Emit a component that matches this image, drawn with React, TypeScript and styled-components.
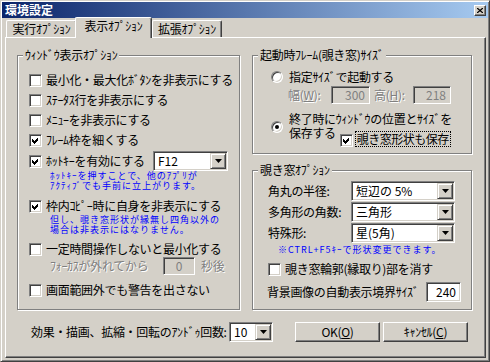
import styled, { createGlobalStyle } from "styled-components";

const face = `"Noto Sans CJK JP", "Noto Sans", sans-serif`;

const GlobalStyle = createGlobalStyle`
  html, body { margin: 0; padding: 0; background: #d4d0c8; }
  body { font-family: ${face}; }
`;

const Window = styled.div`
  width: 490px;
  height: 362px;
  box-sizing: border-box;
  display: flex;
  flex-direction: column;
  padding: 1px;
  background: #d4d0c8;
  border: 1px solid;
  border-color: #d4d0c8 #404040 #404040 #d4d0c8;
  box-shadow: inset 1px 1px #fff, inset -1px -1px #808080;
  font-family: ${face};
  font-size: 12px;
  line-height: 12px;
  letter-spacing: -0.3px;
  color: #000;
`;

const TitleBar = styled.div`
  height: 16px;
  flex: none;
  display: flex;
  align-items: center;
  justify-content: space-between;
  padding: 0 2px 0 3px;
  background: linear-gradient(to right, #0a246a, #a6caf0);
`;

const Title = styled.span`
  color: #fff;
  font-weight: bold;
  line-height: 16px;
  letter-spacing: 0;
`;

const CloseButton = styled.div`
  width: 12px;
  height: 11px;
  box-sizing: border-box;
  display: flex;
  align-items: center;
  justify-content: center;
  background: #d4d0c8;
  border: 1px solid;
  border-color: #fff #404040 #404040 #fff;
  box-shadow: inset -1px -1px #808080;
`;

const TabStrip = styled.div`
  height: 19px;
  flex: none;
  display: flex;
  align-items: flex-end;
  margin: 0 2px 0 3px;
  padding-left: 1px;
  position: relative;
  z-index: 1;
`;

const Tab = styled.div<{ $w: number; $active?: boolean }>`
  width: ${(p) => p.$w}px;
  height: ${(p) => (p.$active ? 21 : 17)}px;
  margin: 0 0 ${(p) => (p.$active ? -1 : 0)}px ${(p) => (p.$active ? -2 : 0)}px;
  padding-bottom: ${(p) => (p.$active ? 4 : 0)}px;
  box-sizing: border-box;
  display: flex;
  align-items: center;
  justify-content: center;
  position: relative;
  z-index: ${(p) => (p.$active ? 2 : 1)};
  background: #d4d0c8;
  border-top: 1px solid #fff;
  border-left: 1px solid #fff;
  border-right: 1px solid #404040;
  border-radius: 2px 2px 0 0;
  box-shadow: inset -1px 0 #808080;
  white-space: nowrap;
`;

const Panel = styled.div`
  flex: 1;
  min-height: 0;
  box-sizing: border-box;
  margin: 0 2px 2px 3px;
  padding: 11px 13px 0 11px;
  display: flex;
  flex-direction: column;
  border: 1px solid;
  border-color: #fff #404040 #404040 #fff;
  box-shadow: inset -1px -1px #808080;
`;

const Columns = styled.div`
  display: grid;
  grid-template-columns: 223px 220px;
  column-gap: 12px;
  align-items: start;
`;

const RightColumn = styled.div`
  display: flex;
  flex-direction: column;
  gap: 10px;
`;

const Group = styled.fieldset<{ $h: number }>`
  margin: 0;
  padding: 0;
  min-inline-size: 0;
  height: ${(p) => p.$h}px;
  box-sizing: border-box;
  border: 1px solid #808080;
  box-shadow: inset 1px 1px #fff, 1px 1px #fff;
`;

const Caption = styled.legend`
  margin-left: 5px;
  padding: 0 2px;
  line-height: 12px;
  background: #d4d0c8;
  white-space: nowrap;
`;

const GroupBody = styled.div<{ $pl: number; $pt: number }>`
  display: flex;
  flex-direction: column;
  padding: ${(p) => p.$pt}px 0 0 ${(p) => p.$pl}px;
`;

const Row = styled.div<{ $mt?: number; $h?: number; $pl?: number }>`
  display: flex;
  align-items: center;
  height: ${(p) => p.$h ?? 20}px;
  margin-top: ${(p) => p.$mt ?? 0}px;
  padding-left: ${(p) => p.$pl ?? 0}px;
  white-space: nowrap;
`;

const Label = styled.span<{ $w?: number; $dim?: boolean; $ml?: number }>`
  flex: none;
  ${(p) => (p.$w ? `width: ${p.$w}px;` : "")}
  margin-left: ${(p) => p.$ml ?? 0}px;
  color: ${(p) => (p.$dim ? "#808080" : "#000")};
  ${(p) => (p.$dim ? "text-shadow: 1px 1px #fff;" : "")}
  white-space: nowrap;
`;

const Note = styled.div<{ $mt?: number; $pl: number }>`
  margin-top: ${(p) => p.$mt ?? 0}px;
  padding-left: ${(p) => p.$pl}px;
  color: #0000ff;
  font-size: 9px;
  line-height: 10px;
  letter-spacing: 1px;
  white-space: nowrap;
`;

const CheckBox = styled.span`
  width: 13px;
  height: 13px;
  flex: none;
  box-sizing: border-box;
  margin-right: 4px;
  display: flex;
  align-items: center;
  justify-content: center;
  background: #fff;
  border: 1px solid;
  border-color: #808080 #fff #fff #808080;
  box-shadow: inset 1px 1px #404040, inset -1px -1px #d4d0c8;
`;

const RadioDot = styled.span<{ $mt: number }>`
  width: 12px;
  height: 12px;
  flex: none;
  box-sizing: border-box;
  margin: ${(p) => p.$mt}px 6px 0 0;
  display: flex;
  align-items: center;
  justify-content: center;
  border-radius: 50%;
  background: #fff;
  border: 1px solid;
  border-color: #808080 #fff #fff #808080;
  box-shadow: inset 1px 1px #404040, inset -1px -1px #d4d0c8;
`;

const Dot = styled.span`
  width: 4px;
  height: 4px;
  border-radius: 50%;
  background: #000;
`;

const RadioRow = styled.div<{ $mt: number }>`
  display: flex;
  align-items: flex-start;
  margin-top: ${(p) => p.$mt}px;
  white-space: nowrap;
`;

const RadioText = styled.span`
  line-height: 20px;
`;

const TextBlock = styled.div`
  display: flex;
  flex-direction: column;
`;

const Line = styled.div`
  display: flex;
  align-items: flex-start;
  line-height: 14px;
`;

const SubCheck = styled.div`
  display: flex;
  align-items: flex-end;
  height: 16px;
  margin: 5px 0 0 4px;
`;

const FocusLabel = styled.span`
  height: 16px;
  box-sizing: border-box;
  margin-left: -2px;
  padding: 0 1px;
  line-height: 14px;
  letter-spacing: -0.5px;
  border: 1px dotted #000;
`;

const Sunken = styled.div<{ $w: number; $h?: number; $off?: boolean }>`
  width: ${(p) => p.$w}px;
  height: ${(p) => p.$h ?? 20}px;
  flex: none;
  box-sizing: border-box;
  display: flex;
  padding: 1px;
  background: ${(p) => (p.$off ? "#d4d0c8" : "#fff")};
  border: 1px solid;
  border-color: #808080 #fff #fff #808080;
  box-shadow: inset 1px 1px #404040, inset -1px -1px #d4d0c8;
`;

const FieldText = styled.span<{ $align: "left" | "right" | "center"; $off?: boolean }>`
  flex: 1;
  align-self: center;
  padding: 0 3px;
  text-align: ${(p) => p.$align};
  color: ${(p) => (p.$off ? "#808080" : "#000")};
  letter-spacing: 0;
`;

const DropButton = styled.span`
  width: 16px;
  flex: none;
  box-sizing: border-box;
  display: flex;
  align-items: center;
  justify-content: center;
  background: #d4d0c8;
  border: 1px solid;
  border-color: #d4d0c8 #404040 #404040 #d4d0c8;
  box-shadow: inset 1px 1px #fff, inset -1px -1px #808080;
`;

const BottomRow = styled.div`
  display: flex;
  align-items: center;
  height: 20px;
  margin-top: 12px;
  padding-left: 14px;
`;

const PushButton = styled.button<{ $ml: number }>`
  width: 85px;
  height: 20px;
  margin-left: ${(p) => p.$ml}px;
  padding: 0;
  box-sizing: border-box;
  background: #d4d0c8;
  border: 1px solid;
  border-color: #fff #404040 #404040 #fff;
  box-shadow: inset -1px -1px #808080;
  font: inherit;
  letter-spacing: -0.3px;
  color: #000;
`;

const CheckMark = () => (
  <svg width="7" height="7" viewBox="0 0 7 7" shapeRendering="crispEdges">
    <path d="M0 2L2 4L6 0V3L2 7L0 5Z" fill="#000" />
  </svg>
);

const Arrow = () => (
  <svg width="7" height="4" viewBox="0 0 7 4">
    <path d="M0 0H7L3.5 4Z" fill="#000" />
  </svg>
);

const Check = ({ on }: { on?: boolean }) => <CheckBox>{on && <CheckMark />}</CheckBox>;

const Radio = ({ on, mt }: { on?: boolean; mt: number }) => (
  <RadioDot $mt={mt}>{on && <Dot />}</RadioDot>
);

const Select = ({ value, w }: { value: string; w: number }) => (
  <Sunken $w={w}>
    <FieldText $align="left">{value}</FieldText>
    <DropButton>
      <Arrow />
    </DropButton>
  </Sunken>
);

const Edit = ({
  value,
  w,
  h,
  off,
  align = "right",
}: {
  value: string;
  w: number;
  h?: number;
  off?: boolean;
  align?: "left" | "right" | "center";
}) => (
  <Sunken $w={w} $h={h} $off={off}>
    <FieldText $align={align} $off={off}>
      {value}
    </FieldText>
  </Sunken>
);

export default function App() {
  return (
    <>
      <GlobalStyle />
      <Window>
        <TitleBar>
          <Title>環境設定</Title>
          <CloseButton>
            <svg width="6" height="5" viewBox="0 0 6 5">
              <path d="M0 0L6 5M6 0L0 5" stroke="#000" strokeWidth="1.3" />
            </svg>
          </CloseButton>
        </TitleBar>

        <TabStrip>
          <Tab $w={71}>実行ｵﾌﾟｼｮﾝ</Tab>
          <Tab $w={77} $active>
            表示ｵﾌﾟｼｮﾝ
          </Tab>
          <Tab $w={70}>拡張ｵﾌﾟｼｮﾝ</Tab>
        </TabStrip>

        <Panel>
          <Columns>
            <Group $h={261}>
              <Caption>ｳｨﾝﾄﾞｳ表示ｵﾌﾟｼｮﾝ</Caption>
              <GroupBody $pl={11} $pt={9}>
                <Row>
                  <Check />
                  <Label>最小化・最大化ﾎﾞﾀﾝを非表示にする</Label>
                </Row>
                <Row>
                  <Check />
                  <Label>ｽﾃｰﾀｽ行を非表示にする</Label>
                </Row>
                <Row>
                  <Check />
                  <Label>ﾒﾆｭｰを非表示にする</Label>
                </Row>
                <Row>
                  <Check on />
                  <Label>ﾌﾚｰﾑ枠を細くする</Label>
                </Row>
                <Row $mt={1}>
                  <Check on />
                  <Label $w={107}>ﾎｯﾄｷｰを有効にする</Label>
                  <Select value="F12" w={75} />
                </Row>
                <Note $mt={0} $pl={21}>
                  ﾎｯﾄｷｰを押すことで、他のｱﾌﾟﾘが
                  <br />
                  ｱｸﾃｨﾌﾞでも手前に立上がります。
                </Note>
                <Row $mt={5}>
                  <Check on />
                  <Label>枠内ｺﾋﾟｰ時に自身を非表示にする</Label>
                </Row>
                <Note $mt={-1} $pl={21}>
                  但し、覗き窓形状が縁無し四角以外の
                  <br />
                  場合は非表示にはなりません。
                </Note>
                <Row $mt={4}>
                  <Check />
                  <Label>一定時間操作しないと最小化する</Label>
                </Row>
                <Row $mt={-2} $h={18} $pl={21}>
                  <Label $w={113} $dim>
                    ﾌｫｰｶｽが外れてから
                  </Label>
                  <Edit value="0" w={32} h={18} off align="center" />
                  <Label $dim $ml={6}>
                    秒後
                  </Label>
                </Row>
                <Row $mt={5}>
                  <Check />
                  <Label>画面範囲外でも警告を出さない</Label>
                </Row>
              </GroupBody>
            </Group>

            <RightColumn>
              <Group $h={105}>
                <Caption>起動時ﾌﾚｰﾑ(覗き窓)ｻｲｽﾞ</Caption>
                <GroupBody $pl={18} $pt={0}>
                  <RadioRow $mt={6}>
                    <Radio mt={4} />
                    <RadioText>指定ｻｲｽﾞで起動する</RadioText>
                  </RadioRow>
                  <Row $mt={-1} $h={18} $pl={17}>
                    <Label $w={43} $dim>
                      幅(<u>W</u>):
                    </Label>
                    <Edit value="300" w={39} h={18} off />
                    <Label $w={39} $dim $ml={4}>
                      高(<u>H</u>):
                    </Label>
                    <Edit value="218" w={38} h={18} off />
                  </Row>
                  <RadioRow $mt={8}>
                    <Radio on mt={9} />
                    <TextBlock>
                      <Line>終了時にｳｨﾝﾄﾞｳの位置とｻｲｽﾞを</Line>
                      <Line>
                        保存する
                        <SubCheck>
                          <Check on />
                          <FocusLabel>覗き窓形状も保存</FocusLabel>
                        </SubCheck>
                      </Line>
                    </TextBlock>
                  </RadioRow>
                </GroupBody>
              </Group>

              <Group $h={146}>
                <Caption>覗き窓ｵﾌﾟｼｮﾝ</Caption>
                <GroupBody $pl={15} $pt={5}>
                  <Row>
                    <Label $w={83}>角丸の半径:</Label>
                    <Select value="短辺の 5%" w={104} />
                  </Row>
                  <Row $mt={1}>
                    <Label $w={83}>多角形の角数:</Label>
                    <Select value="三角形" w={104} />
                  </Row>
                  <Row $mt={1}>
                    <Label $w={83}>特殊形:</Label>
                    <Select value="星(5角)" w={104} />
                  </Row>
                  <Note $mt={2} $pl={10}>
                    ※CTRL+F5ｷｰで形状変更できます。
                  </Note>
                  <Row $mt={4}>
                    <Check />
                    <Label>覗き窓輪郭(縁取り)部を消す</Label>
                  </Row>
                  <Row $mt={3}>
                    <Label $w={159} $ml={-1}>
                      背景画像の自動表示境界ｻｲｽﾞ
                    </Label>
                    <Edit value="240" w={35} />
                  </Row>
                </GroupBody>
              </Group>
            </RightColumn>
          </Columns>

          <BottomRow>
            <Label $w={198}>効果・描画、拡縮・回転のｱﾝﾄﾞｩ回数:</Label>
            <Select value="10" w={44} />
            <PushButton $ml={22}>
              OK(<u>O</u>)
            </PushButton>
            <PushButton $ml={3}>
              ｷｬﾝｾﾙ(<u>C</u>)
            </PushButton>
          </BottomRow>
        </Panel>
      </Window>
    </>
  );
}
